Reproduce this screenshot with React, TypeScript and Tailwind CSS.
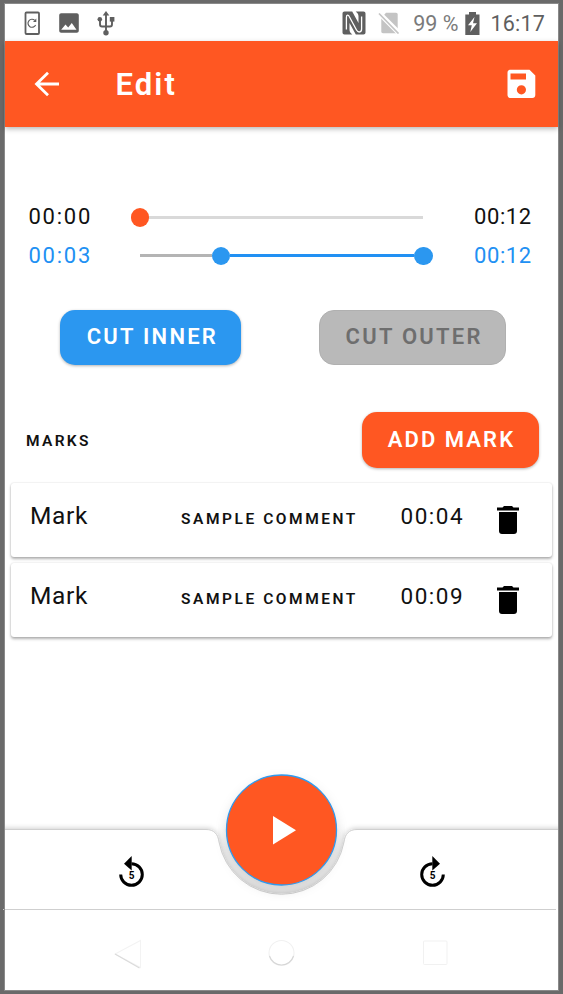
import React from "react";

function StatusBar() {
  return (
    <div className="flex h-[37px] shrink-0 items-center pt-px pr-[13px] pl-[19px] text-[#5f5f5f]">
      <svg width="17" height="25" viewBox="0 0 17 25" fill="none" stroke="currentColor">
        <rect x="1.5" y="1.5" width="13.5" height="21.5" rx="1" strokeWidth="1.8" />
        <path d="M11.6 14a4 4 0 1 1-.8-4.6" strokeWidth="1.2" />
        <path d="M12.3 7.5v3.4H9z" fill="currentColor" stroke="none" />
      </svg>
      <svg className="ml-[18px]" width="21" height="20" viewBox="0 0 21 20">
        <path fill="currentColor" fillRule="evenodd" d="M2.2.3h15.6c1.1 0 2 .9 2 2v15.4c0 1.100-.9 2-2 2H2.200c-1.100 0-2-.9-2-2V2.300c0-1.100.9-2 2-2zM2.200 16.700h15.300L12.800 10l-3.600 4.600-2.700-3.100z" />
      </svg>
      <svg className="ml-[17px]" width="19" height="25" viewBox="0 0 19 25" fill="none" stroke="currentColor" strokeWidth="1.9">
        <path d="M9 21V3M3 9v4.200c0 1.600.8 2.300 2 2.300h8c1.300 0 2-.7 2-2.300V9" />
        <path d="M9 0l3.300 4.500H5.700z" fill="currentColor" stroke="none" />
        <circle cx="2.800" cy="8.300" r="2.300" fill="currentColor" stroke="none" />
        <path d="M12.800 6h4.600v4.600h-4.600z" fill="currentColor" stroke="none" />
        <circle cx="9" cy="21.800" r="2.700" fill="currentColor" stroke="none" />
      </svg>
      <div className="grow" />
      <svg width="24" height="24" viewBox="0 0 24 24" fill="currentColor">
        <path d="M2.500.500h7.700L16.500 12V5.500c0-2-.8-3.500-2.800-5h7.800c1.200 0 2 .8 2 2v19c0 1.200-.8 2-2 2h-7.700L7.500 12v6.500c0 2 .8 3.500 2.800 5H2.500c-1.200 0-2-.8-2-2v-19c0-1.200.8-2 2-2z" />
        <path d="M4.400 18.500V6.500C4.400 3.500 6.300 3.500 7.500 6L14.500 19c1.700 3 5.100 2.500 5.100-1V5.500" fill="none" stroke="#fff" strokeWidth="1.300" />
      </svg>
      <svg className="ml-3" width="22" height="22" viewBox="0 0 22 22">
        <path fill="#c4c4c4" d="M8 .8h10c1 0 1.700.7 1.700 1.700v17c0 1-.7 1.700-1.700 1.700H5c-1 0-1.700-.7-1.700-1.700V6z" />
        <path d="M.7.700L21 21" stroke="#fff" strokeWidth="5" />
        <path d="M1 1.500L20.500 21.500" stroke="#c4c4c4" strokeWidth="1.700" />
      </svg>
      <span className="ml-[13px] pt-px text-[21.500px] leading-none whitespace-nowrap text-[#7b7b7b]">99 %</span>
      <svg className="ml-[7px]" width="15" height="23" viewBox="0 0 15 23">
        <path fill="currentColor" d="M4 0h7v2.500h3.500V23H.3V2.500H4z" />
        <path fill="#fff" d="M9.500 5L3 13.200h3.800L5.300 20 12 11.300H8z" />
      </svg>
      <span className="ml-[10px] pt-px text-[21.500px] leading-none tracking-[0.2px]">16:17</span>
    </div>
  );
}

function AppBar() {
  return (
    <header className="relative flex h-[86px] shrink-0 items-center bg-[#ff5722] pr-[22.500px] pl-[29px] text-white shadow-[0_2px_5px_rgba(0,0,0,0.28)]">
      <svg width="26" height="26" viewBox="0 0 26 26" fill="none" stroke="currentColor" strokeWidth="2.800">
        <path d="M25 13H3M14 1.700L2.500 13 14 24.300" />
      </svg>
      <h1 className="ml-[55.500px] text-[31px] leading-none font-semibold tracking-[2.100px]">Edit</h1>
      <svg className="ml-auto" width="29" height="30" viewBox="0 0 29 30">
        <path fill="currentColor" fillRule="evenodd" d="M3.500.8H22.500L28.300 6.500V26c0 1.800-1.200 3-3 3H3.500c-1.800 0-3-1.200-3-3V3.800c0-1.800 1.200-3 3-3zM3.500 4.500v6h15.500v-6zM14.400 16.200a4.600 4.600 0 1 0 0 9.200 4.600 4.600 0 0 0 0-9.200z" />
      </svg>
    </header>
  );
}

function TimeRow({ start, end, color, children }: { start: string; end: string; color: string; children: React.ReactNode }) {
  return (
    <div className={`flex h-[38.500px] items-center text-[22px] leading-none ${color}`}>
      <span className="ml-[23.500px] w-[102px] tracking-[1.750px]">{start}</span>
      <div className="flex w-[302px] items-center">{children}</div>
      <span className="ml-[41.500px] tracking-[0.600px]">{end}</span>
    </div>
  );
}

function MarkCard({ time }: { time: string }) {
  return (
    <div className="flex h-[74.500px] items-center rounded-[3px] bg-white shadow-[0_2px_3px_rgba(0,0,0,0.3),0_0_2px_rgba(0,0,0,0.14)]">
      <span className="ml-[19px] w-[151px] pb-[8px] text-[24.500px] leading-none tracking-[0.700px]">Mark</span>
      <span className="w-[219.500px] text-[15.500px] leading-none font-semibold tracking-[2.550px] whitespace-nowrap">SAMPLE COMMENT</span>
      <span className="w-[96.500px] pb-[8px] text-[22.500px] leading-none tracking-[1.500px]">{time}</span>
      <svg width="22" height="28" viewBox="0 0 22 28">
        <path d="M0 1.500h5.500L7 0h8l1.500 1.500H22v3H0zM2 6h18v19c0 1.700-1.200 3-3 3H5c-1.800 0-3-1.300-3-3z" />
      </svg>
    </div>
  );
}

function SkipIcon({ forward = false }: { forward?: boolean }) {
  return (
    <svg width="27" height="32" viewBox="0 0 27 32">
      <g transform={forward ? "translate(27 0) scale(-1 1)" : undefined}>
        <path d="M2.700 18.500A10.800 10.800 0 1 0 13.500 7.700" fill="none" stroke="#000" strokeWidth="3" />
        <path d="M13.700 0v14.500L6 7.700z" />
      </g>
      <text x="13.500" y="22.700" textAnchor="middle" fontSize="10" fontWeight="700">5</text>
    </svg>
  );
}

function PlayerBar() {
  return (
    <div className="relative h-[140px] shrink-0">
      <svg className="absolute inset-0" width="553" height="140" viewBox="0 -1 553 140">
        <defs>
          <filter id="barShadow" x="-10%" y="-30%" width="120%" height="160%">
            <feDropShadow dx="0" dy="-1" stdDeviation="2.500" floodOpacity=".18" />
          </filter>
          <filter id="playShadow" x="-30%" y="-30%" width="160%" height="160%">
            <feDropShadow dx="0" dy="5" stdDeviation="6" floodOpacity=".14" />
          </filter>
          <clipPath id="barClip"><path d="M0 -1H553V139H0z" /></clipPath>
          <linearGradient id="notch" x1="0" y1="0" x2="0" y2="1">
            <stop offset="0.45" stopColor="#f0f0f0" stopOpacity="0" />
            <stop offset="0.65" stopColor="#f0f0f0" />
          </linearGradient>
        </defs>
        <g clipPath="url(#barClip)">
          <circle cx="276.500" cy="60" r="63.500" fill="url(#notch)" />
          <path d="M-20 59.500H201C209 59.500 213 64 214 72A63.500 63.500 0 0 0 339 72C340 64 344 59.500 352 59.500H573V160H-20z" fill="#fff" stroke="#d0d0d0" strokeWidth="1" filter="url(#barShadow)" />
          <circle cx="276.500" cy="60" r="55" fill="#ff5722" filter="url(#playShadow)" />
        </g>
        <circle cx="276.500" cy="60" r="55" fill="#ff5722" stroke="#2e9bf0" strokeWidth="1.300" />
        <path d="M268 46L291 60.300 268 74.500z" fill="#fff" />
      </svg>
      <div className="relative flex h-full justify-between pt-[87px] pr-[112px] pl-[113px]">
        <SkipIcon />
        <SkipIcon forward />
      </div>
    </div>
  );
}

function NavBar() {
  return (
    <nav className="-ml-0.5 mr-0.5 flex h-[81px] shrink-0 border-t border-[#cfcfcf] pt-[29px] pl-[111px]">
      <svg width="28" height="31" viewBox="0 0 28 31" fill="#fff" strokeWidth="1.100">
        <path d="M26.500 1.500v27L1 15z" stroke="#f3f3f3" />
        <path d="M1 15l24.500 14" stroke="#dadada" />
      </svg>
      <svg className="ml-[126px]" width="28" height="30" viewBox="0 0 28 30" fill="#fff" strokeWidth="1.100">
        <circle cx="13.500" cy="14" r="12.500" stroke="#f1f1f1" />
        <path d="M1.500 17a12.500 12.500 0 0 0 24 0" stroke="#d6d6d6" />
      </svg>
      <svg className="ml-[126px]" width="27" height="29" viewBox="0 0 27 29" fill="#fff">
        <rect x="1.500" y="2" width="23.500" height="23.500" rx="1" stroke="#f1f1f1" />
      </svg>
    </nav>
  );
}

export default function App() {
  return (
    <div className="h-[994px] w-[563px] bg-[#6a6a6a] pt-1 pr-[5px] pb-1 pl-[5px] font-['Roboto',sans-serif] text-[#111]">
      <div className="flex h-full flex-col bg-white outline outline-[#8a8a8a]">
        <StatusBar />
        <AppBar />
        <section className="pt-[71px]">
          <TimeRow start="00:00" end="00:12" color="text-[#111]">
            <span className="size-[18.500px] rounded-full bg-[#ff5722]" />
            <span className="h-[3px] w-[274px] bg-[#d9d9d9]" />
          </TimeRow>
          <TimeRow start="00:03" end="00:12" color="text-[#2190f3]">
            <span className="ml-[9px] h-[3px] w-[72px] bg-[#b4b4b4]" />
            <span className="size-[18.500px] rounded-full bg-[#2b97f0]" />
            <span className="h-[3px] w-[184px] bg-[#2190f3]" />
            <span className="size-[18.500px] rounded-full bg-[#2b97f0]" />
          </TimeRow>
        </section>
        <section className="mt-[34.500px] flex h-[55px] shrink-0 gap-[78px] pl-[55.400px] text-[22px] font-semibold tracking-[2.250px]">
          <button className="w-[181px] rounded-[15px] bg-[#2b97f0] pb-0.5 pl-[3px] text-white shadow-[0_1px_3px_rgba(0,0,0,0.3)]">CUT INNER</button>
          <button className="w-[186.500px] rounded-[15px] border border-[#b0b0b0] bg-[#b9b9b9] pb-0.5 pl-[3px] text-[#6e6e6e]">CUT OUTER</button>
        </section>
        <section className="mt-[47.500px] flex h-[55.500px] shrink-0 items-center justify-between pr-[19px] pl-[21px]">
          <h2 className="pt-[3px] text-[15.500px] leading-none font-semibold tracking-[2.300px]">MARKS</h2>
          <button className="h-full w-[177px] rounded-[15px] bg-[#ff5722] pb-px pl-0.5 text-[22px] font-semibold tracking-[2.050px] text-white shadow-[0_1px_3px_rgba(0,0,0,0.3)]">ADD MARK</button>
        </section>
        <section className="mt-[15px] mr-[6px] ml-[6px] flex flex-col gap-[5.500px]">
          <MarkCard time="00:04" />
          <MarkCard time="00:09" />
        </section>
        <div className="grow" />
        <PlayerBar />
        <NavBar />
      </div>
    </div>
  );
}
